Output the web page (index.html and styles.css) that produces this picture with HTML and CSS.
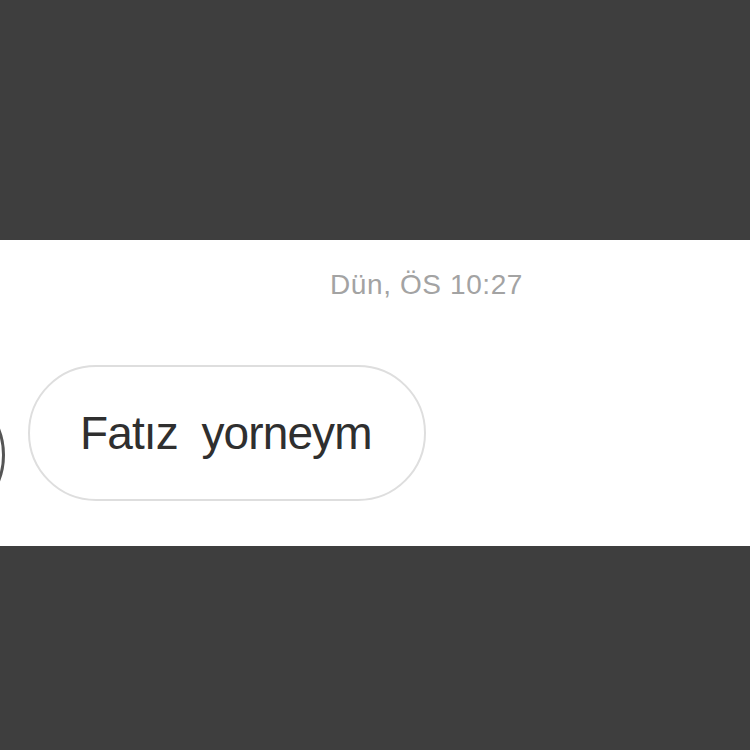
FILE: index.html
```html
<!DOCTYPE html>
<html lang="tr">
<head>
  <meta charset="UTF-8">
  <title>Mesaj</title>
  <link rel="stylesheet" href="styles.css">
</head>
<body>
  <main class="chat">
    <div class="time">Dün, ÖS 10:27</div>
    <div class="row">
      <div class="avatar"></div>
      <div class="bubble">Fatız&nbsp; yorneym</div>
    </div>
  </main>
</body>
</html>
```
FILE: styles.css
```css
body {
  margin: 0;
  background-color: #3e3e3e;
  font-family: "Liberation Sans", Arial, sans-serif;
}

.chat {
  margin-top: 240px;
  height: 306px;
  background-color: #fff;
  overflow: hidden;
}

.time {
  padding-top: 30px;
  margin-left: 330px;
  font-size: 28px;
  letter-spacing: 0.6px;
  color: #a3a3a3;
  line-height: 30px;
}

.row {
  display: flex;
  align-items: flex-start;
  margin-top: 65px;
}

.avatar {
  flex: none;
  width: 134px;
  height: 134px;
  margin-left: -135px;
  margin-top: 20px;
  border: 3px solid #555;
  border-radius: 50%;
}

.bubble {
  margin-left: 23px;
  width: 394px;
  height: 132px;
  box-sizing: content-box;
  border: 2px solid #dedede;
  border-radius: 68px;
  display: flex;
  align-items: center;
  text-indent: 50px;
  font-size: 46px;
  letter-spacing: -0.9px;
  color: #2f2f2f;
}
```
